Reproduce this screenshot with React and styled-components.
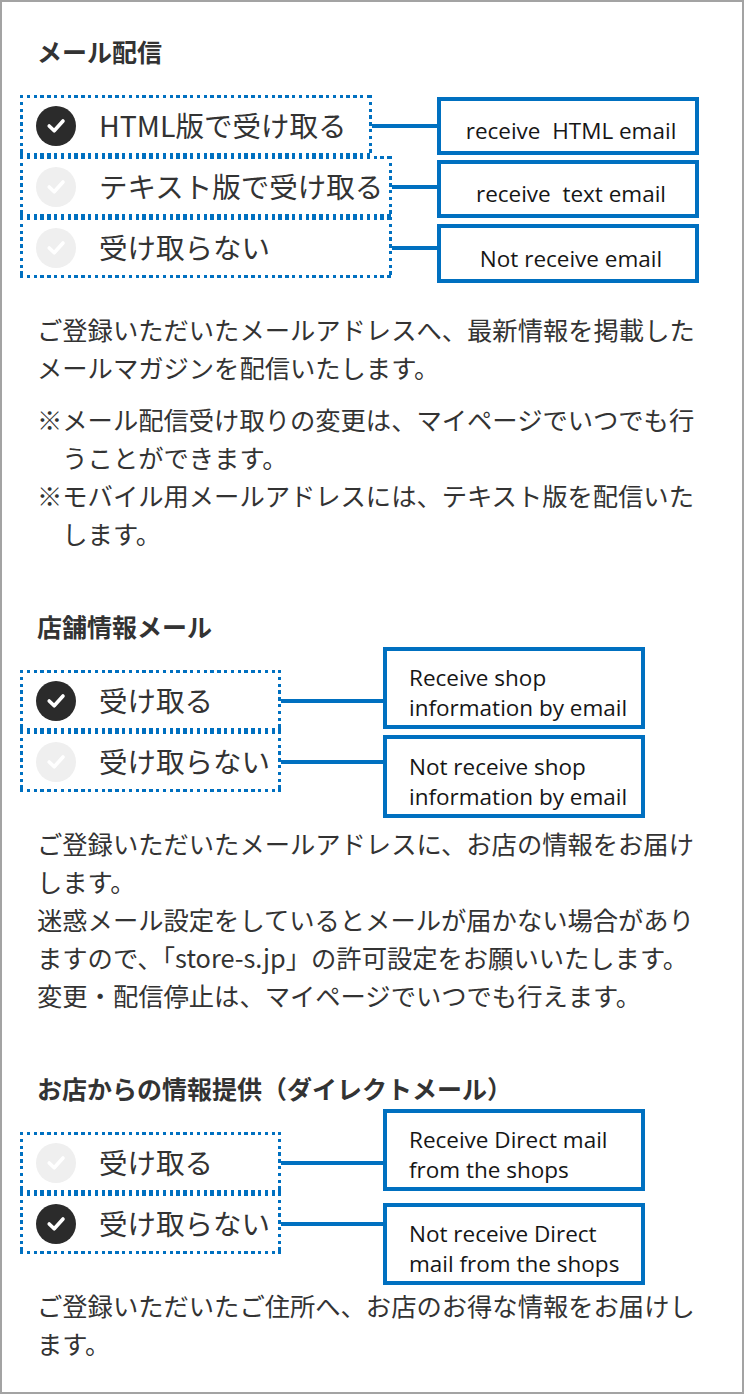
import React from "react";
import styled, { createGlobalStyle } from "styled-components";

const BLUE = "#0070c0";
const INK = "#333333";

const GlobalStyle = createGlobalStyle`
  html, body {
    margin: 0;
    padding: 0;
    background: #ffffff;
  }
  body {
    font-family: "Noto Sans CJK JP", "Noto Sans", sans-serif;
    color: ${INK};
  }
`;

const Page = styled.div`
  box-sizing: border-box;
  width: 744px;
  height: 1394px;
  border: 2px solid #a3a3a3;
  padding: 31px 0 0 18px;
  overflow: hidden;
  background: #ffffff;
`;

const Section = styled.section`
  & + & {
    margin-top: 56px;
  }
`;

const Heading = styled.h2`
  margin: 0 0 0 17px;
  font-size: 25px;
  line-height: 36px;
  font-weight: 700;
  color: ${INK};
`;

/* option list; callouts are laid over it */
const Options = styled.div`
  position: relative;
  margin-top: 26px;
`;

const OptionRow = styled.div`
  display: flex;
  align-items: center;
  width: ${(p) => p.$reach}px;
`;

/* square-dot frame drawn with repeating gradients on all four sides */
const dotsX = `repeating-linear-gradient(90deg, ${BLUE} 0 3.4px, transparent 3.4px 6.8px)`;
const dotsY = `repeating-linear-gradient(180deg, ${BLUE} 0 3.4px, transparent 3.4px 6.8px)`;

const Frame = styled.label`
  box-sizing: border-box;
  flex: none;
  display: flex;
  align-items: center;
  gap: 23px;
  width: ${(p) => p.$width}px;
  height: 61px;
  padding-left: 16px;
  background:
    ${dotsX} left top / 100% 3px no-repeat,
    ${dotsX} left bottom / 100% 3px no-repeat,
    ${dotsY} left top / 3px 100% no-repeat,
    ${dotsY} right top / 3px 100% no-repeat;
`;

const Connector = styled.span`
  flex: 1;
  height: 4px;
  background: ${BLUE};
`;

const MarkSvg = styled.svg`
  flex: none;
  display: block;
`;

const Label = styled.span`
  font-size: 28.5px;
  line-height: 1;
  color: ${INK};
  white-space: nowrap;
`;

const Callout = styled.div`
  position: absolute;
  left: ${(p) => p.$left}px;
  top: ${(p) => p.$top}px;
  box-sizing: border-box;
  width: 262px;
  height: ${(p) => p.$height}px;
  padding: 10px 0 0 ${(p) => (p.$centered ? 6 : 22)}px;
  border: 4px solid ${BLUE};
  background: #ffffff;
  display: flex;
  flex-direction: column;
  justify-content: center;
  align-items: ${(p) => (p.$centered ? "center" : "flex-start")};
  font-family: "Open Sans", "Noto Sans", sans-serif;
  font-size: 22.5px;
  line-height: 30px;
  color: #161616;
  white-space: pre;
`;

const Body = styled.div`
  margin: 32px 0 0 17px;
  width: 670px;
  font-size: 25.3px;
  line-height: 38px;
  color: ${INK};
`;

const Para = styled.p`
  margin: 0;
`;

const Notes = styled.ul`
  list-style: none;
  margin: 14px 0 0;
  padding: 0;
`;

const Note = styled.li`
  padding-left: 1em;
  text-indent: -1em;
`;

function CheckMark({ on }) {
  return (
    <MarkSvg width="40" height="40" viewBox="0 0 40 40" aria-hidden="true">
      <circle cx="20" cy="20" r="20" fill={on ? "#2b2b2b" : "#efefef"} />
      <path
        d="M13.2 20 L18.2 24.8 L27 15"
        fill="none"
        stroke="#ffffff"
        strokeWidth="3.6"
        strokeLinecap="round"
        strokeLinejoin="round"
      />
    </MarkSvg>
  );
}

function Option({ on, label, width, reach }) {
  return (
    <OptionRow $reach={reach}>
      <Frame $width={width}>
        <CheckMark on={on} />
        <Label>{label}</Label>
      </Frame>
      <Connector />
    </OptionRow>
  );
}

const sections = [
  {
    title: "メール配信",
    reach: 417,
    options: [
      { on: true, label: "HTML版で受け取る", width: 352 },
      { on: false, label: "テキスト版で受け取る", width: 372 },
      { on: false, label: "受け取らない", width: 372 },
    ],
    callouts: [
      { text: "receive  HTML email", left: 417, top: 2, height: 58, centered: true },
      { text: "receive  text email", left: 417, top: 65, height: 58, centered: true },
      { text: "Not receive email", left: 417, top: 129, height: 59, centered: true },
    ],
  },
  {
    title: "店舗情報メール",
    reach: 363,
    options: [
      { on: true, label: "受け取る", width: 261 },
      { on: false, label: "受け取らない", width: 261 },
    ],
    callouts: [
      { text: "Receive shop\ninformation by email", left: 363, top: -23, height: 82 },
      { text: "Not receive shop\ninformation by email", left: 363, top: 65, height: 83 },
    ],
  },
  {
    title: "お店からの情報提供（ダイレクトメール）",
    reach: 363,
    options: [
      { on: false, label: "受け取る", width: 261 },
      { on: true, label: "受け取らない", width: 261 },
    ],
    callouts: [
      { text: "Receive Direct mail\nfrom the shops", left: 363, top: -23, height: 82 },
      { text: "Not receive Direct\nmail from the shops", left: 363, top: 71, height: 82 },
    ],
  },
];

const bodies = [
  <Body key="b0">
    <Para>ご登録いただいたメールアドレスへ、最新情報を掲載したメールマガジンを配信いたします。</Para>
    <Notes>
      <Note>※メール配信受け取りの変更は、マイページでいつでも行うことができます。</Note>
      <Note>※モバイル用メールアドレスには、テキスト版を配信いたします。</Note>
    </Notes>
  </Body>,
  <Body key="b1">
    <Para>ご登録いただいたメールアドレスに、お店の情報をお届けします。</Para>
    <Para>迷惑メール設定をしているとメールが届かない場合がありますので、「store-s.jp」の許可設定をお願いいたします。</Para>
    <Para>変更・配信停止は、マイページでいつでも行えます。</Para>
  </Body>,
  <Body key="b2">
    <Para>ご登録いただいたご住所へ、お店のお得な情報をお届けします。</Para>
  </Body>,
];

export default function App() {
  return (
    <>
      <GlobalStyle />
      <Page>
        {sections.map((s, i) => (
          <Section key={s.title}>
            <Heading>{s.title}</Heading>
            <Options>
              {s.options.map((o) => (
                <Option key={o.label} on={o.on} label={o.label} width={o.width} reach={s.reach} />
              ))}
              {s.callouts.map((c) => (
                <Callout
                  key={c.text}
                  $left={c.left}
                  $top={c.top}
                  $height={c.height}
                  $centered={c.centered}
                >
                  {c.text}
                </Callout>
              ))}
            </Options>
            {bodies[i]}
          </Section>
        ))}
      </Page>
    </>
  );
}
